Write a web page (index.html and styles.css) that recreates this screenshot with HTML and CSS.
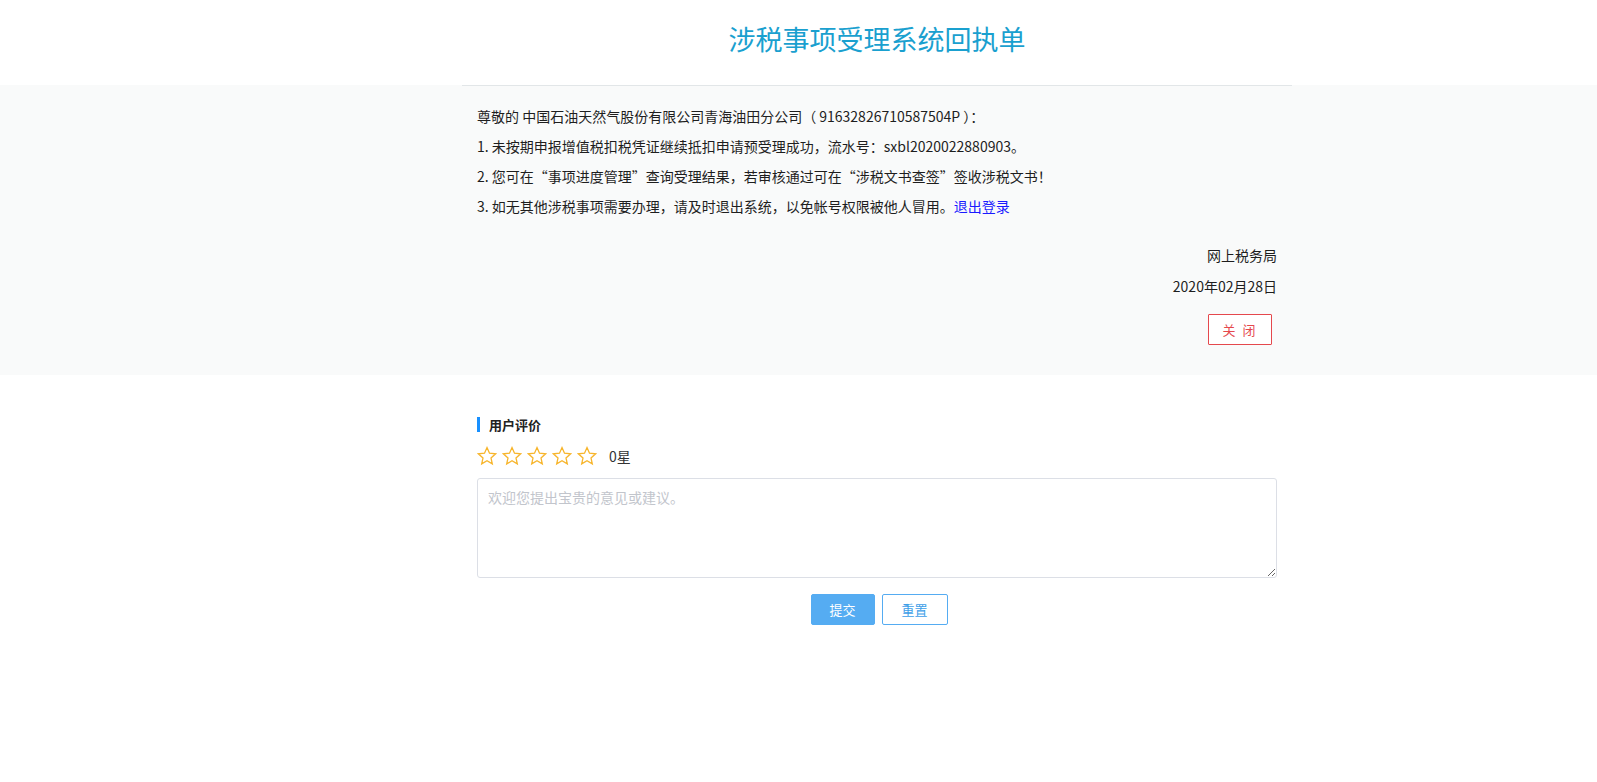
FILE: index.html
```html
<!DOCTYPE html>
<html lang="zh-CN">
<head>
<meta charset="utf-8">
<title>涉税事项受理系统回执单</title>
<link rel="stylesheet" href="styles.css">
</head>
<body>
<header class="head">
  <div class="wrap head-inner">
    <h1 class="title">涉税事项受理系统回执单</h1>
  </div>
</header>
<section class="receipt">
  <div class="wrap receipt-inner">
    <p class="line">尊敬的 中国石油天然气股份有限公司青海油田分公司（ 91632826710587504P ）：</p>
    <p class="line">1. 未按期申报增值税扣税凭证继续抵扣申请预受理成功，流水号：sxbl2020022880903。</p>
    <p class="line">2. 您可在“事项进度管理”查询受理结果，若审核通过可在“涉税文书查签”签收涉税文书！</p>
    <p class="line">3. 如无其他涉税事项需要办理，请及时退出系统，以免帐号权限被他人冒用。<a class="link" href="#">退出登录</a></p>
    <div class="sign">
      <p class="sign-line">网上税务局</p>
      <p class="sign-line">2020年02月28日</p>
      <button class="btn-close">关 闭</button>
    </div>
  </div>
</section>
<section class="wrap review">
  <h2 class="review-title">用户评价</h2>
  <div class="stars">
    <svg class="star" viewBox="0 0 20 20"><path d="M10 1.6 L12.5 7.2 L18.6 7.8 L14 11.9 L15.3 17.9 L10 14.8 L4.7 17.9 L6 11.9 L1.4 7.8 L7.5 7.2 Z"/></svg>
    <svg class="star" viewBox="0 0 20 20"><path d="M10 1.6 L12.5 7.2 L18.6 7.8 L14 11.9 L15.3 17.9 L10 14.8 L4.7 17.9 L6 11.9 L1.4 7.8 L7.5 7.2 Z"/></svg>
    <svg class="star" viewBox="0 0 20 20"><path d="M10 1.6 L12.5 7.2 L18.6 7.8 L14 11.9 L15.3 17.9 L10 14.8 L4.7 17.9 L6 11.9 L1.4 7.8 L7.5 7.2 Z"/></svg>
    <svg class="star" viewBox="0 0 20 20"><path d="M10 1.6 L12.5 7.2 L18.6 7.8 L14 11.9 L15.3 17.9 L10 14.8 L4.7 17.9 L6 11.9 L1.4 7.8 L7.5 7.2 Z"/></svg>
    <svg class="star" viewBox="0 0 20 20"><path d="M10 1.6 L12.5 7.2 L18.6 7.8 L14 11.9 L15.3 17.9 L10 14.8 L4.7 17.9 L6 11.9 L1.4 7.8 L7.5 7.2 Z"/></svg>
    <span class="score">0星</span>
  </div>
  <textarea class="advice" placeholder="欢迎您提出宝贵的意见或建议。"></textarea>
  <div class="actions">
    <button class="btn btn-primary">提交</button>
    <button class="btn btn-plain">重置</button>
  </div>
</section>
</body>
</html>
```
FILE: styles.css
```css
* { box-sizing: border-box; }
html, body {
  margin: 0;
  padding: 0;
  background: #fff;
  font-family: "Noto Sans CJK SC", "Noto Sans", "Liberation Sans", sans-serif;
  color: #222;
}
.wrap {
  width: 830px;
  margin-left: 462px;
}
.head-inner {
  height: 85px;
  display: flex;
  align-items: center;
  justify-content: center;
}
.title {
  margin: 0 0 8px 0;
  font-size: 27px;
  font-weight: 400;
  color: #1aa0cf;
}
.receipt {
  background: #f9fafa;
  height: 290px;
}
.receipt-inner {
  padding: 15px 15px 0 15px;
  border-top: 1px solid #e2e6e8;
}
.line {
  margin: 0;
  font-size: 14px;
  line-height: 30px;
  color: #1e1e1e;
}
.link {
  color: #1a1aff;
  text-decoration: none;
}
.sign {
  margin-top: 19px;
  display: flex;
  flex-direction: column;
  align-items: flex-end;
}
.sign-line {
  margin: 0;
  font-size: 14px;
  line-height: 30.5px;
  color: #1e1e1e;
}
.btn-close {
  margin-top: 13px;
  margin-right: 5px;
  width: 64px;
  height: 31px;
  border: 1px solid #e5484d;
  background: #fff;
  color: #e5484d;
  font-family: inherit;
  font-size: 13px;
  letter-spacing: 2px;
  border-radius: 1px;
  padding: 0;
}
.review {
  padding: 42px 15px 0 15px;
}
.review-title {
  margin: 0;
  padding-left: 9px;
  border-left: 3px solid #1890ff;
  font-size: 13px;
  line-height: 15px;
  font-weight: 700;
  color: #222;
}
.stars {
  display: flex;
  align-items: center;
  margin-top: 14px;
  height: 20px;
}
.star {
  width: 20px;
  height: 20px;
  margin-right: 5px;
  fill: none;
  stroke: #f7b52c;
  stroke-width: 1.3;
  stroke-linejoin: miter;
}
.score {
  margin-left: 7px;
  font-size: 14px;
  color: #333;
}
.advice {
  display: block;
  margin-top: 12px;
  width: 800px;
  height: 100px;
  border: 1px solid #dcdfe6;
  border-radius: 3px;
  padding: 8px 10px;
  font-family: inherit;
  font-size: 14px;
  line-height: 20px;
  color: #333;
  resize: vertical;
  background: #fff;
}
.advice::placeholder { color: #c2c5cc; }
.actions {
  margin-top: 16px;
  display: flex;
  justify-content: center;
  gap: 7px;
  padding-left: 4px;
}
.btn {
  width: 64px;
  height: 31px;
  font-family: inherit;
  font-size: 13px;
  border-radius: 2px;
  padding: 0;
}
.btn-primary {
  background: #55acf2;
  border: 1px solid #55acf2;
  color: #fff;
}
.btn-plain {
  width: 66px;
  background: #fff;
  border: 1px solid #55acf2;
  color: #3d9ee8;
}
```
